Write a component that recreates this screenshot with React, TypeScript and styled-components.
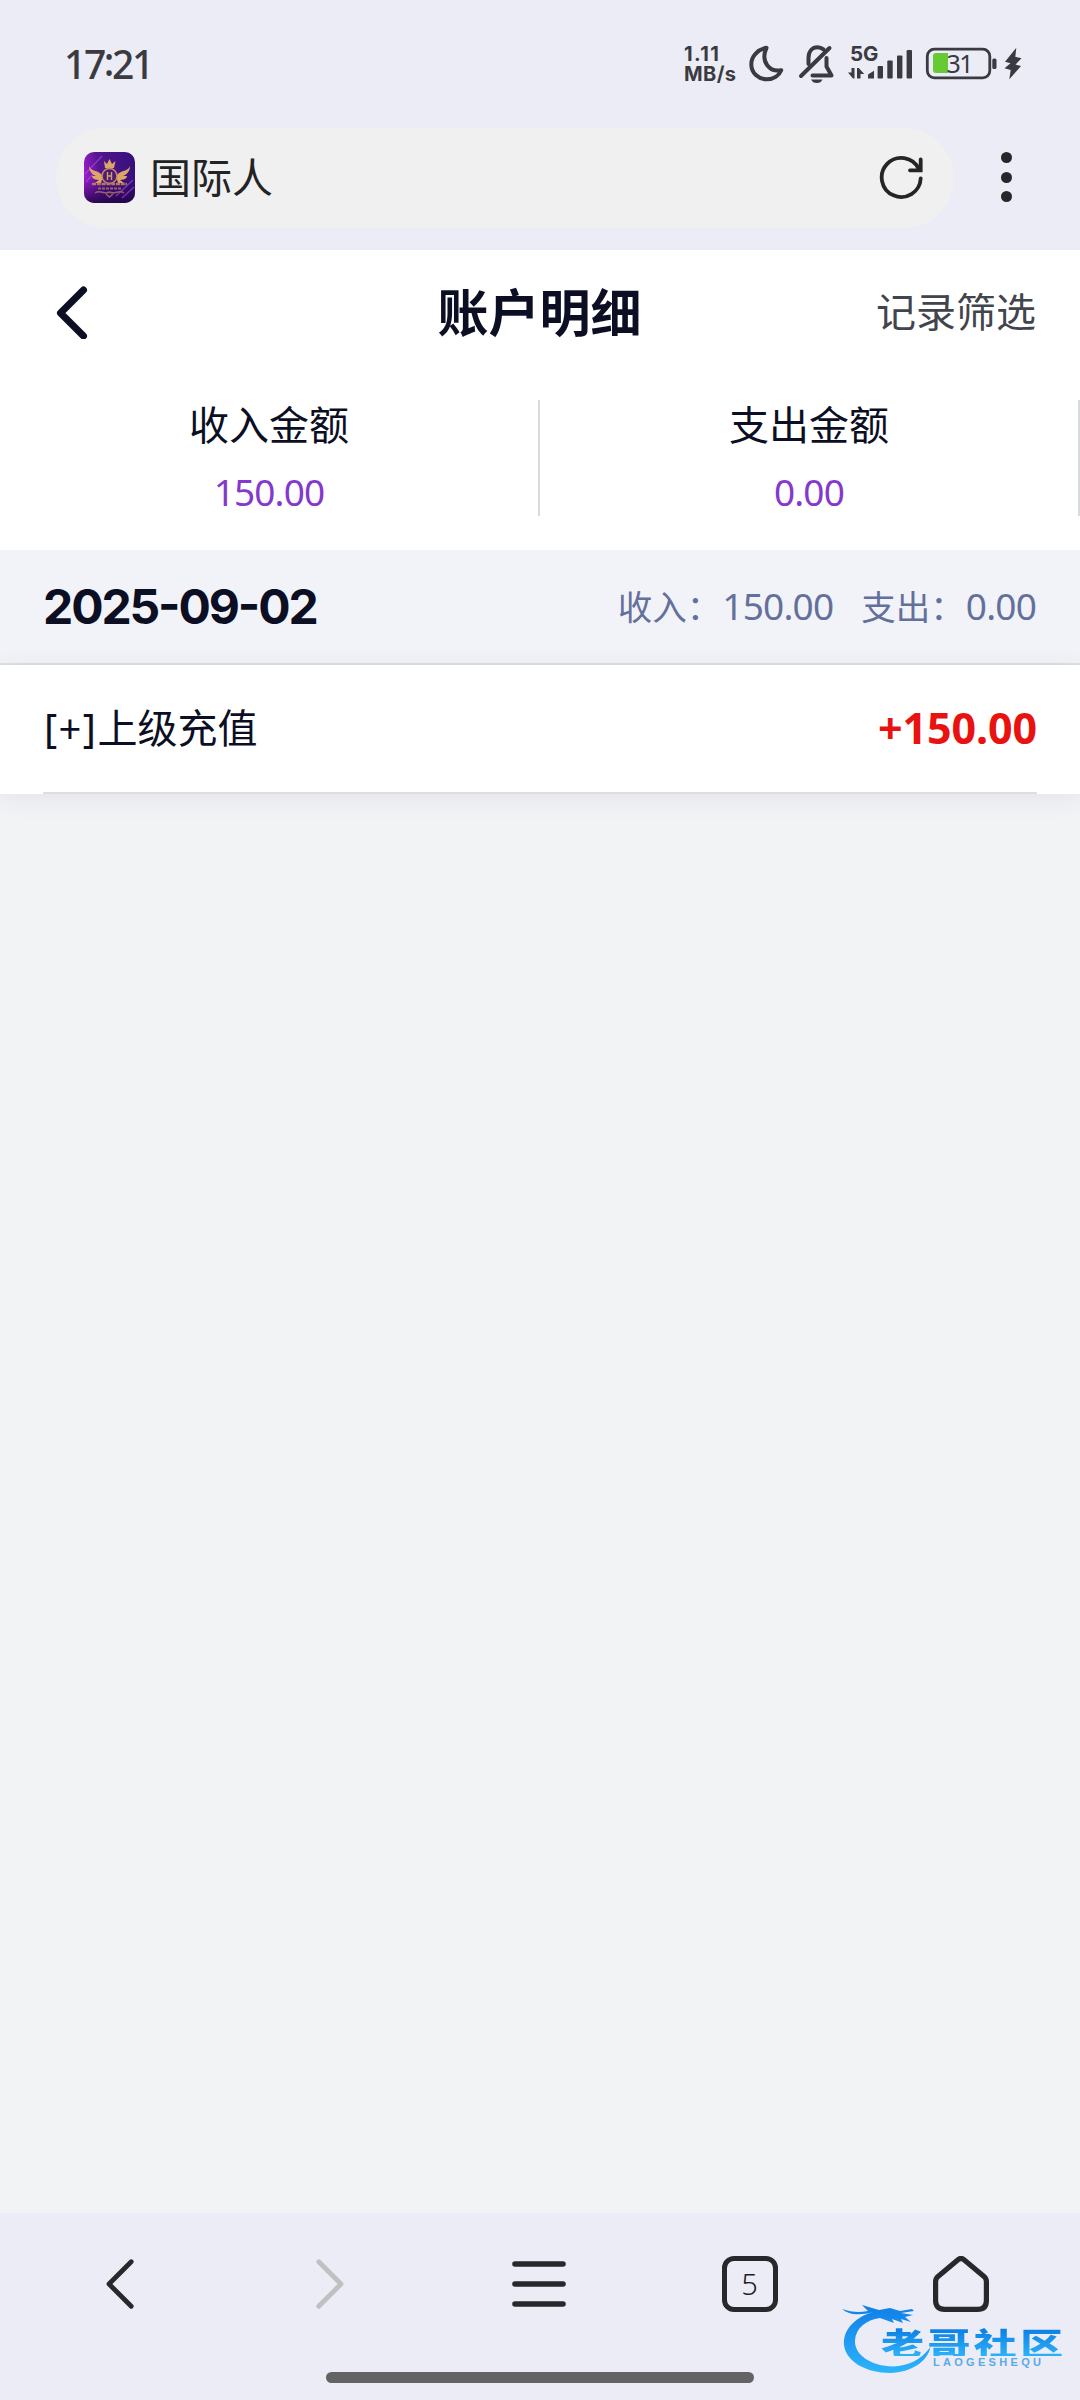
import React from "react";
import styled, { createGlobalStyle } from "styled-components";

const Global = createGlobalStyle`
  *, *::before, *::after { box-sizing: border-box; }
  html, body { margin: 0; padding: 0; }
  body { width: 1080px; background: #f2f3f5; }
  svg { display: block; flex: none; }
`;

const Screen = styled.div`
  position: relative;
  display: flex;
  flex-direction: column;
  width: 1080px;
  height: 2400px;
  overflow: hidden;
  background: #f2f3f5;
  color: #0c0f24;
  font-family: "Noto Sans", "Noto Sans CJK SC", sans-serif;
`;

/* ---------- system + browser chrome ---------- */

const Chrome = styled.header`
  flex: none;
  height: 250px;
  background: #ebecf5;
`;

const StatusBar = styled.div`
  display: flex;
  align-items: center;
  justify-content: space-between;
  height: 127px;
  padding: 0 58px 0 64px;
  color: #3a3a40;
`;

const Clock = styled.span`
  font-size: 39px;
  font-weight: 500;
  line-height: 50px;
  letter-spacing: -2.4px;
`;

const ClockColon = styled.span`
  position: relative;
  top: -3px;
`;

const StatusIcons = styled.div`
  display: flex;
  align-items: center;
`;

const NetSpeed = styled.div`
  display: flex;
  flex-direction: column;
  width: 64px;
  font-family: Inter, "Noto Sans", sans-serif;
  font-size: 20px;
  font-weight: 700;
  line-height: 20px;
`;

const NetLine = styled.span<{ $spacing: number }>`
  letter-spacing: ${(p) => p.$spacing}px;
`;

const Omnibox = styled.div`
  display: flex;
  align-items: center;
  height: 101px;
  padding-left: 56px;
`;

const Pill = styled.div`
  display: flex;
  align-items: center;
  width: 898px;
  height: 100px;
  padding: 0 30.5px 1px 28px;
  border-radius: 50px;
  background: #f0f0f0;
`;

const SiteName = styled.span`
  flex: 1;
  padding-left: 15px;
  font-size: 41px;
  line-height: 60px;
  color: #232325;
`;

const MoreButton = styled.div`
  display: flex;
  flex-direction: column;
  align-items: center;
  gap: 8.5px;
  width: 105px;
  padding-bottom: 1px;
`;

const Dot = styled.i`
  width: 11px;
  height: 11px;
  border-radius: 50%;
  background: #26272b;
`;

/* ---------- page ---------- */

const TitleBar = styled.div`
  display: grid;
  grid-template-columns: 1fr auto 1fr;
  align-items: center;
  flex: none;
  height: 126px;
  padding: 0 44px 2px 52px;
  background: #fff;
`;

const Title = styled.h1`
  margin: 0 0 0 -9px;
  font-size: 51px;
  font-weight: 600;
  line-height: 70px;
  color: #0c0f24;
`;

const FilterLink = styled.span`
  justify-self: end;
  font-size: 40px;
  line-height: 56px;
  color: #42454c;
`;

const Totals = styled.section`
  display: flex;
  flex: none;
  padding: 24px 0 34px;
  background: #fff;
`;

const Total = styled.div`
  display: flex;
  flex: 1;
  flex-direction: column;
  align-items: center;
  height: 116px;
  border-right: 2px solid #d9dadd;
`;

const TotalLabel = styled.span`
  font-size: 40px;
  line-height: 50px;
`;

const TotalValue = styled.span`
  margin-top: 19px;
  font-size: 37px;
  font-weight: 450;
  line-height: 46px;
  letter-spacing: -0.9px;
  color: #8438cd;
`;

const DayHeader = styled.div`
  display: flex;
  flex: none;
  align-items: center;
  justify-content: space-between;
  height: 115px;
  padding: 0 44px 0 43px;
  border-bottom: 2px solid #dddfe0;
  background: #f2f3f8;
`;

const DayDate = styled.span`
  font-family: Inter, "Noto Sans", sans-serif;
  font-size: 48px;
  font-weight: 700;
  font-feature-settings: "case";
  line-height: 60px;
  letter-spacing: -2.1px;
`;

const DaySums = styled.div`
  display: flex;
  gap: 28px;
  font-size: 34.5px;
  line-height: 50px;
  color: #64709c;
`;

const SumAmount = styled.span`
  margin-left: 1px;
  font-size: 37px;
  font-weight: 450;
  letter-spacing: -0.8px;
`;

const Records = styled.div`
  flex: none;
  background: #fff;
  box-shadow: 0 4px 24px rgba(60, 50, 110, 0.08);
`;

const Record = styled.div`
  display: flex;
  align-items: center;
  justify-content: space-between;
  height: 129px;
  margin: 0 43px;
  padding-bottom: 2px;
  border-bottom: 2px solid #dedee1;
`;

const RecordName = styled.span`
  font-size: 40px;
  line-height: 56px;
`;

const RecordSign = styled.span`
  padding-left: 1px;
  letter-spacing: 1.4px;
`;

const RecordAmount = styled.span`
  font-size: 43px;
  font-weight: 700;
  line-height: 56px;
  letter-spacing: -0.1px;
  color: #e81310;
`;

const Filler = styled.div`
  flex: 1;
`;

/* ---------- bottom navigation ---------- */

const BottomBar = styled.footer`
  flex: none;
  height: 187px;
  background: #ebecf5;
`;

const NavRow = styled.nav`
  display: grid;
  grid-template-columns: 211px 209px 210px 211px 211px;
  place-items: center;
  height: 142px;
  padding: 0 14px;
`;

const TabCount = styled.span`
  display: flex;
  align-items: center;
  justify-content: center;
  width: 56px;
  height: 56px;
  border: 5px solid #27282b;
  border-radius: 12px;
  font-size: 29px;
  font-weight: 300;
  line-height: 40px;
  color: #1c1d20;
`;

const HomeIndicator = styled.div`
  width: 428px;
  height: 11px;
  margin: 17px auto 0;
  border-radius: 6px;
  background: #636364;
`;

/* ---------- watermark laid over the navigation ---------- */

const Watermark = styled.div`
  position: absolute;
  left: 840px;
  top: 2300px;
  width: 230px;
  height: 80px;
`;

const WatermarkArt = styled.svg`
  position: absolute;
  left: 0;
  top: 0;
`;

const WatermarkName = styled.div`
  position: absolute;
  left: 41px;
  top: 20px;
  font-family: "Noto Sans CJK SC", sans-serif;
  font-size: 43px;
  font-weight: 900;
  line-height: 42px;
  letter-spacing: 3.4px;
  white-space: nowrap;
  transform: scaleY(0.72);
  color: transparent;
  background: linear-gradient(#0c7fe6 10%, #2bb0f8 95%);
  background-clip: text;
  -webkit-background-clip: text;
`;

const WatermarkLatin = styled.div`
  position: absolute;
  left: 93px;
  top: 57px;
  font-family: "Liberation Sans", Arial, sans-serif;
  font-size: 11px;
  font-weight: 700;
  line-height: 11px;
  letter-spacing: 3.3px;
  color: #5aaae8;
`;

/* ---------- drawings ---------- */

const INK = "#3a3a40";

const StatusGlyphs = () => (
  <svg width="274" height="44" viewBox="748 42 274 44" fill="none">
    <path
      d="M766.500 47.800C758 49.500 751.300 56 751.300 64.200C751.300 73 758.300 79.300 767 79.300C773.500 79.300 779 75.600 781.200 70.200C770 72.500 760 62 766.500 47.800Z"
      stroke={INK} strokeWidth="4" strokeLinejoin="round"
    />
    <g stroke={INK} strokeWidth="4" strokeLinecap="round" strokeLinejoin="round">
      <path d="M801 76L829.500 48" />
      <path d="M808.500 64V58C808.500 51 812.500 47.200 817.500 47.200C819.800 47.200 821.800 48 823.500 49.300" />
      <path d="M812.500 75.500H831.500L826.500 66.500V58" />
    </g>
    <path d="M811 79.500H822.500C821.500 82 819.500 83 816.800 83S812.200 82 811 79.500Z" fill={INK} />
    <g fill={INK}>
      <path d="M851.500 68H854.500V78.500H853L848 72.500H851.500Z" />
      <path d="M857 68H858.800L864.200 74H860.500V78.500H857Z" />
      <path d="M868 74.500L874 70.800V78.500H868Z" />
      <rect x="877.600" y="66" width="5.400" height="12.500" rx="1" />
      <rect x="887.300" y="60.500" width="5.400" height="18" rx="1" />
      <rect x="897" y="55.500" width="5.400" height="23" rx="1" />
      <rect x="906.600" y="50" width="5.400" height="28.500" rx="1" />
    </g>
    <text x="850" y="61" fill={INK} fontFamily="Inter, sans-serif" fontSize="20.500" fontWeight="700">5G</text>
    <rect x="927.300" y="49.200" width="62.500" height="28.600" rx="7" stroke={INK} strokeWidth="2.800" />
    <path d="M936 53H948V73H936Q933 73 933 70V56Q933 53 936 53Z" fill="#67ca35" />
    <text x="946.500" y="73" fill={INK} fontFamily="Noto Sans, sans-serif" fontSize="25" fontWeight="400" letterSpacing="-1.500">31</text>
    <rect x="992.300" y="58.500" width="4.200" height="10.500" rx="1.600" fill={INK} />
    <path d="M1016.300 47.800L1005 61.700L1010.500 63.300L1004.500 68.300L1010.700 70L1009.300 79.300L1021 66L1015.500 64.500L1021.500 58.300L1015.300 56.700Z" fill={INK} />
  </svg>
);

const Favicon = () => (
  <svg width="51" height="51" viewBox="0 0 51 51">
    <defs>
      <linearGradient id="fav" x1="0" y1="0.600" x2="1" y2="0.400">
        <stop offset="0" stopColor="#a21fd0" />
        <stop offset="0.350" stopColor="#55158f" />
        <stop offset="1" stopColor="#36107a" />
      </linearGradient>
      <linearGradient id="favDark" x1="0" y1="0" x2="0" y2="1">
        <stop offset="0.500" stopColor="#1d0350" stopOpacity="0" />
        <stop offset="1" stopColor="#1d0340" stopOpacity="0.850" />
      </linearGradient>
    </defs>
    <rect width="51" height="51" rx="10" fill="url(#fav)" />
    <rect width="51" height="51" rx="10" fill="url(#favDark)" />
    <path d="M1 22L18 4M2 30L10 21M32 44L49 28M38 46L50 35" stroke="#b04be0" strokeWidth="1.200" opacity="0.650" />
    <g fill="#dca766">
      <path d="M20 9L23 12L25.500 7L28 12L31.500 9L30 16H21Z" />
      <path d="M5 14C7 20 13 17 19 24L17 31H11L15 28C9 28 8 25 8 24L12 24C7 22 5 18 5 14Z" />
      <path d="M46 14C44 20 38 17 32 24L34 31H40L36 28C42 28 43 25 43 24L39 24C44 22 46 18 46 14Z" />
    </g>
    <circle cx="25.500" cy="24" r="7.500" fill="#4c1a78" stroke="#c98c5c" strokeWidth="1.500" />
    <path d="M23.500 20V28M27.500 20V28M23.500 24H27.500" stroke="#d6a068" strokeWidth="1.400" />
    <path d="M8 32H43" stroke="#b07a62" strokeWidth="2.600" strokeDasharray="4 0.800" />
    <path d="M14 36.500H38" stroke="#98646c" strokeWidth="2" strokeDasharray="3 1" />
    <path d="M11 41C16 37 20 43 25.500 40C31 43 35 37 40 41M22 42L25.500 45L29 42" fill="none" stroke="#98606e" strokeWidth="1.500" />
  </svg>
);

const Reload = () => (
  <svg width="46" height="46" viewBox="877 154 46 46" fill="none" stroke="#252528" strokeWidth="3.800" strokeLinecap="round">
    <path d="M919.700 178.500A19.500 19.500 0 1 1 917.800 169" />
    <path d="M919.700 159.500V170.300H909" />
  </svg>
);

const Chevron = ({ color, flip }: { color: string; flip?: boolean }) => (
  <svg width="28" height="50" viewBox="0 0 28 50" fill="none">
    <path
      d={flip ? "M2.800 2.800L25 25L2.800 47.200" : "M25.200 2.800L3 25L25.200 47.200"}
      stroke={color} strokeWidth="4.800" strokeLinecap="round" strokeLinejoin="round"
    />
  </svg>
);

const App = () => (
  <Screen>
    <Global />
    <Chrome>
      <StatusBar>
        <Clock>17<ClockColon>:</ClockColon>21</Clock>
        <StatusIcons>
          <NetSpeed>
            <NetLine $spacing={1.4}>1.11</NetLine>
            <NetLine $spacing={0.4}>MB/s</NetLine>
          </NetSpeed>
          <StatusGlyphs />
        </StatusIcons>
      </StatusBar>
      <Omnibox>
        <Pill>
          <Favicon />
          <SiteName>国际人</SiteName>
          <Reload />
        </Pill>
        <MoreButton>
          <Dot />
          <Dot />
          <Dot />
        </MoreButton>
      </Omnibox>
    </Chrome>

    <TitleBar>
      <svg width="40" height="54" viewBox="0 0 40 54" fill="none">
        <path d="M31.500 5L8.500 28L31.500 51" stroke="#0c0f24" strokeWidth="7" strokeLinecap="round" strokeLinejoin="round" />
      </svg>
      <Title>账户明细</Title>
      <FilterLink>记录筛选</FilterLink>
    </TitleBar>

    <Totals>
      <Total>
        <TotalLabel>收入金额</TotalLabel>
        <TotalValue>150.00</TotalValue>
      </Total>
      <Total>
        <TotalLabel>支出金额</TotalLabel>
        <TotalValue>0.00</TotalValue>
      </Total>
    </Totals>

    <DayHeader>
      <DayDate>2025-09-02</DayDate>
      <DaySums>
        <span>收入：<SumAmount>150.00</SumAmount></span>
        <span>支出：<SumAmount>0.00</SumAmount></span>
      </DaySums>
    </DayHeader>

    <Records>
      <Record>
        <RecordName><RecordSign>[+]</RecordSign>上级充值</RecordName>
        <RecordAmount>+150.00</RecordAmount>
      </Record>
    </Records>

    <Filler />

    <BottomBar>
      <NavRow>
        <Chevron color="#27282b" />
        <Chevron color="#c0c0c3" flip />
        <svg width="56" height="48" viewBox="0 0 56 48">
          <path d="M4 4H52M4 24H52M4 44H52" stroke="#27282b" strokeWidth="5.600" strokeLinecap="round" />
        </svg>
        <TabCount>5</TabCount>
        <svg width="56" height="56" viewBox="0 0 56 56" fill="none">
          <path
            d="M25.300 3.600Q28 1.400 30.700 3.600L51 20.500Q53.400 22.500 53.400 25.500V44.500Q53.400 53.400 44.500 53.400H11.500Q2.600 53.400 2.600 44.500V25.500Q2.600 22.500 5 20.500Z"
            stroke="#27282b" strokeWidth="5.200" strokeLinejoin="round"
          />
        </svg>
      </NavRow>
      <HomeIndicator />
    </BottomBar>

    <Watermark>
      <WatermarkArt width="100" height="80" viewBox="840 2300 100 80">
        <defs>
          <linearGradient id="dragon" x1="0" y1="0" x2="0" y2="1">
            <stop offset="0" stopColor="#0f7fe8" />
            <stop offset="1" stopColor="#2db4fa" />
          </linearGradient>
        </defs>
        <g fill="url(#dragon)">
          <path d="M873 2312C853 2318 843 2331 844 2345C846 2362 867 2373 890 2373C912 2372 927 2362 930.500 2347C921 2360 908 2366 893 2366.500C871 2366 854 2355 855 2340C856 2328 866 2320 880 2318L894 2323L892 2319L903 2323L901 2319L911 2322L905 2317L913 2315L901 2313L914 2311L912 2309L900 2311L890 2308L879 2310L862 2305L868 2311C858 2313 851 2312 842 2309C850 2316 862 2315 873 2312Z" />
        </g>
      </WatermarkArt>
      <WatermarkName>老哥社区</WatermarkName>
      <WatermarkLatin>LAOGESHEQU</WatermarkLatin>
    </Watermark>
  </Screen>
);

export default App;
